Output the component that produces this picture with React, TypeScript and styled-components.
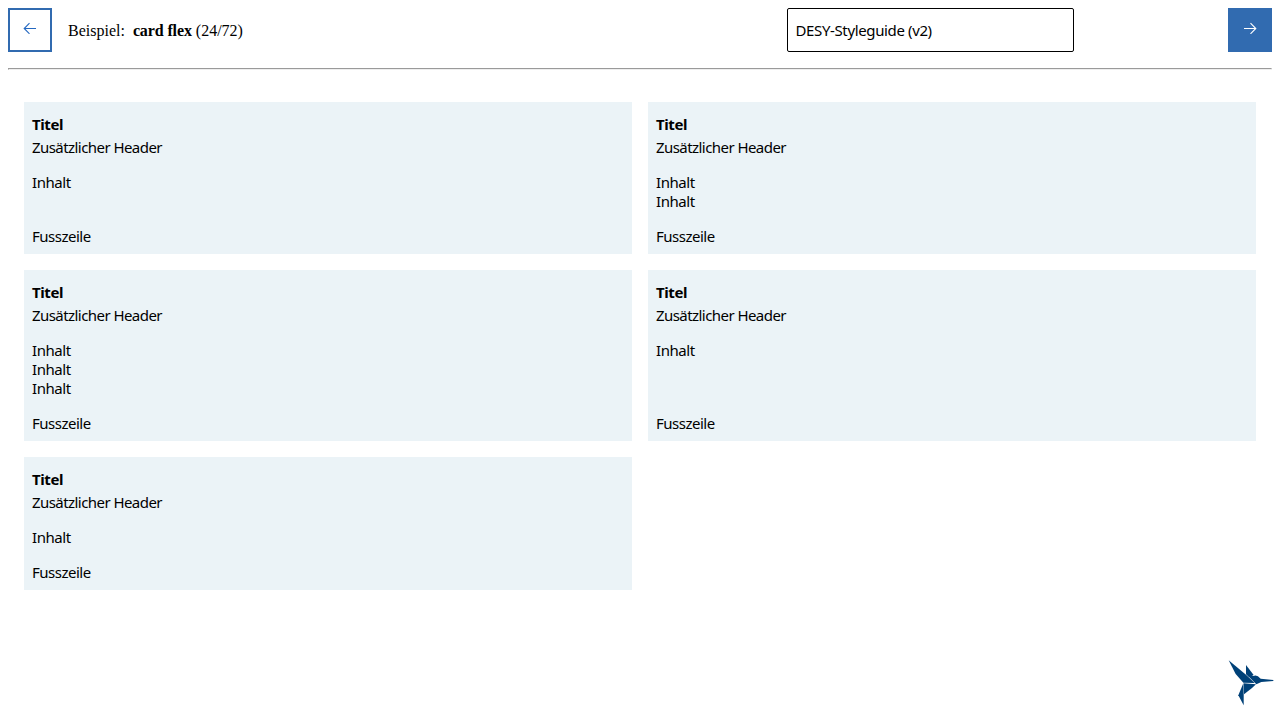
import React from 'react';
import styled, { createGlobalStyle, css } from 'styled-components';

const GlobalStyle = createGlobalStyle`
  body {
    margin: 8px;
    background: #fff;
    color: #000;
    font: 16px/19px "Liberation Serif", serif;
  }
`;

const sans = css`
  font-family: "Noto Sans", sans-serif;
  font-size: 15px;
  line-height: 19px;
`;

const Toolbar = styled.header`
  display: flex;
  align-items: center;
  height: 44px;
`;

const NavButton = styled.button<{ $filled?: boolean }>`
  box-sizing: border-box;
  width: 44px;
  height: 44px;
  display: flex;
  align-items: center;
  justify-content: center;
  padding: 0 0 4px;
  border: 2px solid #316bb0;
  border-radius: 0;
  background: ${p => (p.$filled ? '#316bb0' : '#fff')};
  color: ${p => (p.$filled ? '#fff' : '#2468c0')};
`;

const Example = styled.div`
  flex: 1;
  padding: 1px 0 0 16px;
  white-space: pre;

  b {
    letter-spacing: -0.12px;
  }
`;

const Picker = styled.div`
  ${sans}
  box-sizing: border-box;
  width: 287.5px;
  height: 44px;
  margin-right: 154px;
  padding: 12px 8px;
  border: 1px solid #000;
  border-radius: 2px;
  letter-spacing: -0.37px;
`;

const Divider = styled.hr`
  margin: 16px 0 0;
`;

const Cards = styled.main`
  display: grid;
  grid-template-columns: 1fr 1fr;
  gap: 16px;
  padding: 32px 16px 0;
`;

const Card = styled.article`
  ${sans}
  display: flex;
  flex-direction: column;
  padding: 13px 8px 8px;
  background: #ebf3f7;
  letter-spacing: -0.42px;
`;

const Title = styled.div`
  font-weight: 700;
  margin-bottom: 4px;
`;

const Subtitle = styled.div`
  letter-spacing: -0.56px;
`;

const Content = styled.div`
  flex: 1;
  padding: 16px 0;
`;

const Footer = styled.div`
  letter-spacing: -0.5px;
`;

const Bird = styled.svg`
  position: fixed;
  right: 0;
  bottom: 8px;
`;

const Arrow = ({ right }: { right?: boolean }) => (
  <svg width="14" height="12" viewBox="0 0 14 12" fill="none" stroke="currentColor" strokeWidth="1.1">
    <path d={right ? 'M1 6.5H12.6M7.5 1.2L12.8 6.5L7.5 11.8' : 'M13 6.5H1.4M6.5 1.2L1.2 6.5L6.5 11.8'} />
  </svg>
);

const contentLines = [1, 2, 3, 1, 1];

export default function App() {
  return (
    <>
      <GlobalStyle />
      <Toolbar>
        <NavButton aria-label="Zurück"><Arrow /></NavButton>
        <Example>Beispiel:  <b>card flex</b> (24/72)</Example>
        <Picker>DESY-Styleguide (v2)</Picker>
        <NavButton $filled aria-label="Weiter"><Arrow right /></NavButton>
      </Toolbar>
      <Divider />
      <Cards>
        {contentLines.map((count, i) => (
          <Card key={i}>
            <Title>Titel</Title>
            <Subtitle>Zusätzlicher Header</Subtitle>
            <Content>
              {Array.from({ length: count }, (_, n) => <div key={n}>Inhalt</div>)}
            </Content>
            <Footer>Fusszeile</Footer>
          </Card>
        ))}
      </Cards>
      <Bird width="60" height="60" viewBox="0 0 180 180">
        <g fill="#004178">
          <path d="M26 25L78 68L104 93L70 92L47 66Z" />
          <path d="M78 39L101 69L88 76L78 67Z" />
          <path d="M82 70L100 72Q110 66 122 80L160 84V87L124 90L109 97Z" />
          <path d="M71 94L108 97L96 108L72 127Z" />
          <path d="M70 94L71 124L71 160L55 130Z" />
        </g>
      </Bird>
    </>
  );
}
